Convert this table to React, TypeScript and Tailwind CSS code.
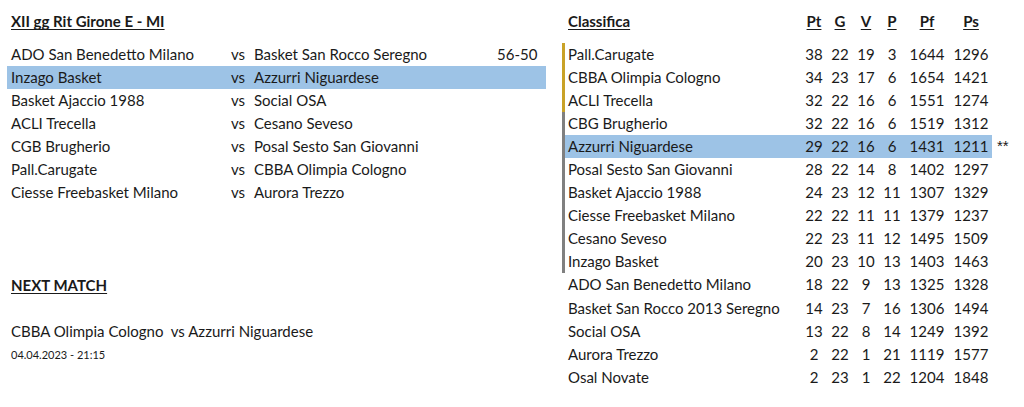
const matches: [string, string, string?][] = [
  ['ADO San Benedetto Milano', 'Basket San Rocco Seregno', '56-50'],
  ['Inzago Basket', 'Azzurri Niguardese'],
  ['Basket Ajaccio 1988', 'Social OSA'],
  ['ACLI Trecella', 'Cesano Seveso'],
  ['CGB Brugherio', 'Posal Sesto San Giovanni'],
  ['Pall.Carugate', 'CBBA Olimpia Cologno'],
  ['Ciesse Freebasket Milano', 'Aurora Trezzo'],
]

const table: [string, number, number, number, number, number, number][] = [
  ['Pall.Carugate', 38, 22, 19, 3, 1644, 1296],
  ['CBBA Olimpia Cologno', 34, 23, 17, 6, 1654, 1421],
  ['ACLI Trecella', 32, 22, 16, 6, 1551, 1274],
  ['CBG Brugherio', 32, 22, 16, 6, 1519, 1312],
  ['Azzurri Niguardese', 29, 22, 16, 6, 1431, 1211],
  ['Posal Sesto San Giovanni', 28, 22, 14, 8, 1402, 1297],
  ['Basket Ajaccio 1988', 24, 23, 12, 11, 1307, 1329],
  ['Ciesse Freebasket Milano', 22, 22, 11, 11, 1379, 1237],
  ['Cesano Seveso', 22, 23, 11, 12, 1495, 1509],
  ['Inzago Basket', 20, 23, 10, 13, 1403, 1463],
  ['ADO San Benedetto Milano', 18, 22, 9, 13, 1325, 1328],
  ['Basket San Rocco 2013 Seregno', 14, 23, 7, 16, 1306, 1494],
  ['Social OSA', 13, 22, 8, 14, 1249, 1392],
  ['Aurora Trezzo', 2, 22, 1, 21, 1119, 1577],
  ['Osal Novate', 2, 23, 1, 22, 1204, 1848],
]

const MY_TEAM = 'Azzurri Niguardese'
const cols = 'grid grid-cols-[232px_28px_24px_28px_24px_46px_42px]'
const heading = 'font-bold underline decoration-1 underline-offset-2'

export default function App() {
  return (
    <div className="flex h-[407px] w-[1024px] bg-white pt-px text-[15px] leading-none text-[#1a1a1a] [font-family:Lato,'Open_Sans',sans-serif]">
      {/* partite della giornata + prossima */}
      <div className="ml-[7px] flex w-[539px] flex-col">
        <div className="flex h-[41.5px] items-center px-1">
          <span className={heading}>XII gg Rit Girone E - MI</span>
        </div>
        {matches.map(([home, away, score]) => (
          <div
            key={home}
            className={`grid h-[23.1px] grid-cols-[220px_23px_243px_1fr] items-center px-1 ${
              home === 'Inzago Basket' ? 'bg-[#9dc3e6]' : ''
            }`}
          >
            <span>{home}</span>
            <span>vs</span>
            <span>{away}</span>
            <span>{score}</span>
          </div>
        ))}
        <div className="h-[69.3px]" />
        <div className="flex h-[23.1px] items-center px-1">
          <span className={heading}>NEXT MATCH</span>
        </div>
        <div className="h-[23.1px]" />
        <div className="flex h-[23.1px] items-center whitespace-pre px-1">
          CBBA Olimpia Cologno  vs Azzurri Niguardese
        </div>
        <div className="flex h-[23.1px] items-center px-1 text-[11px]">04.04.2023 - 21:15</div>
      </div>

      {/* classifica */}
      <div className="ml-[16px] flex flex-col">
        <div className={`${cols} h-[41.5px] items-center pl-[6px] text-center`}>
          <span className={`${heading} text-left`}>Classifica</span>
          <span className={heading}>Pt</span>
          <span className={heading}>G</span>
          <span className={heading}>V</span>
          <span className={heading}>P</span>
          <span className={heading}>Pf</span>
          <span className={heading}>Ps</span>
        </div>
        {table.map(([team, ...nums], i) => (
          <div key={team} className="flex h-[23.1px] items-stretch">
            <div
              className={`w-[3px] ${i < 3 ? 'bg-[#c9a227]' : i < 10 ? 'bg-[#808080]' : ''}`}
            />
            <div
              className={`${cols} items-center pl-[3px] text-center ${
                team === MY_TEAM ? 'bg-[#9dc3e6]' : ''
              }`}
            >
              <span className="text-left">{team}</span>
              {nums.map((n, j) => (
                <span key={j}>{n}</span>
              ))}
            </div>
            {team === MY_TEAM && (
              <span className="ml-[5px] pt-[3px] text-[15px] [font-family:'Liberation_Sans',sans-serif]">
                **
              </span>
            )}
          </div>
        ))}
      </div>
    </div>
  )
}
